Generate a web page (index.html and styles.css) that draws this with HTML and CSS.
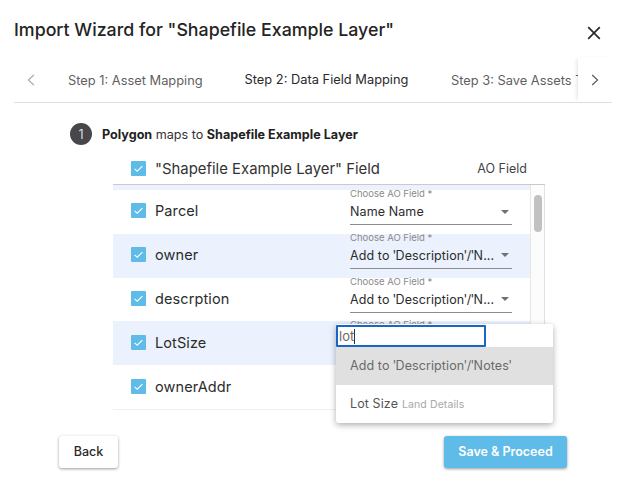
FILE: index.html
```html
<!DOCTYPE html>
<html lang="en">
<head>
<meta charset="utf-8">
<title>Import Wizard</title>
<link rel="stylesheet" href="styles.css">
</head>
<body>
<div class="dialog">
  <header class="head">
    <h1 class="title">Import Wizard for "Shapefile Example Layer"</h1>
    <svg class="close" width="14" height="14" viewBox="0 0 14 14"><path d="M1.2 1.2 12.8 12.8M12.8 1.2 1.2 12.8" stroke="#2a2a2a" stroke-width="1.7" fill="none"/></svg>
  </header>
  <nav class="tabs">
    <div class="arrow arrow-left"><svg width="8" height="12" viewBox="0 0 8 12"><path d="M6.8 1 1.4 6l5.4 5" stroke="#a8a8a8" stroke-width="1.1" fill="none"/></svg></div>
    <div class="tab-strip">
      <div class="tab tab-one">Step 1: Asset Mapping</div>
      <div class="tab tab-two active">Step 2: Data Field Mapping</div>
      <div class="tab tab-three">Step 3: Save Assets T</div>
    </div>
    <div class="arrow arrow-right"><svg width="8" height="12" viewBox="0 0 8 12"><path d="M1.2 1 6.6 6l-5.4 5" stroke="#555" stroke-width="1.1" fill="none"/></svg></div>
  </nav>
  <section class="step">
    <span class="badge">1</span>
    <p class="step-text"><b>Polygon</b> maps to <b>Shapefile Example Layer</b></p>
  </section>
  <section class="table">
    <div class="table-head">
      <span class="check"><svg width="15" height="15" viewBox="0 0 15 15"><path d="M3.6 7.8 6.2 10.2 11.4 5.2" stroke="#fff" stroke-width="1.1" fill="none"/></svg></span>
      <span class="head-name">"Shapefile Example Layer" Field</span>
      <span class="head-ao">AO Field</span>
    </div>
    <div class="list">
      <div class="rows">
        <div class="row-stub"></div>
        <div class="row">
          <span class="check"><svg width="15" height="15" viewBox="0 0 15 15"><path d="M3.6 7.8 6.2 10.2 11.4 5.2" stroke="#fff" stroke-width="1.1" fill="none"/></svg></span>
          <span class="name">Parcel</span>
          <div class="select"><span class="select-label">Choose AO Field *</span><div class="select-value"><span class="value-text">Name Name</span><i class="caret"></i></div></div>
        </div>
        <div class="row shade">
          <span class="check"><svg width="15" height="15" viewBox="0 0 15 15"><path d="M3.6 7.8 6.2 10.2 11.4 5.2" stroke="#fff" stroke-width="1.1" fill="none"/></svg></span>
          <span class="name">owner</span>
          <div class="select"><span class="select-label">Choose AO Field *</span><div class="select-value"><span class="value-text">Add to <q>'</q>Description<q>'</q>/<q>'</q>N...</span><i class="caret"></i></div></div>
        </div>
        <div class="row">
          <span class="check"><svg width="15" height="15" viewBox="0 0 15 15"><path d="M3.6 7.8 6.2 10.2 11.4 5.2" stroke="#fff" stroke-width="1.1" fill="none"/></svg></span>
          <span class="name">descrption</span>
          <div class="select"><span class="select-label">Choose AO Field *</span><div class="select-value"><span class="value-text">Add to <q>'</q>Description<q>'</q>/<q>'</q>N...</span><i class="caret"></i></div></div>
        </div>
        <div class="row shade">
          <span class="check"><svg width="15" height="15" viewBox="0 0 15 15"><path d="M3.6 7.8 6.2 10.2 11.4 5.2" stroke="#fff" stroke-width="1.1" fill="none"/></svg></span>
          <span class="name">LotSize</span>
          <div class="select"><span class="select-label">Choose AO Field *</span></div>
        </div>
        <div class="row">
          <span class="check"><svg width="15" height="15" viewBox="0 0 15 15"><path d="M3.6 7.8 6.2 10.2 11.4 5.2" stroke="#fff" stroke-width="1.1" fill="none"/></svg></span>
          <span class="name">ownerAddr</span>
        </div>
      </div>
      <div class="scroll"><div class="thumb"></div></div>
    </div>
  </section>
  <footer class="foot">
    <button class="btn btn-back" type="button">Back</button>
    <button class="btn btn-save" type="button">Save &amp; Proceed</button>
  </footer>
  <div class="menu">
    <div class="search"><div class="search-box"><span class="typed">lot</span></div></div>
    <div class="option selected"><span>Add to <q>'</q>Description<q>'</q>/<q>'</q>Notes<q>'</q></span></div>
    <div class="option"><span>Lot Size</span> <small class="option-note">Land Details</small></div>
  </div>
</div>
</body>
</html>
```
FILE: styles.css
```css
* { box-sizing: border-box; }
html, body { margin: 0; padding: 0; background: #fff; }
body { font-family: Inter, "Liberation Sans", sans-serif; color: #242424; overflow: hidden; }
.dialog { position: relative; width: 626px; height: 485px; padding: 0 14px; }

q { quotes: none; letter-spacing: -.7px; margin-left: -.7px; }

.head { display: flex; justify-content: space-between; align-items: center; height: 57px; padding-top: 3px; }
.title { margin: 0; font-size: 17.8px; font-weight: 500; line-height: 22px; color: #242424; }
.close { margin: 5px 11px 0 0; }

.tabs { display: flex; align-items: stretch; height: 46px; width: 598px; border-bottom: 1px solid #dfdfdf; }
.arrow { flex: none; display: flex; align-items: center; justify-content: center; }
.arrow-left { width: 34px; }
.arrow-right { width: 34px; position: relative; box-shadow: -3px 0 4px -2px rgba(0,0,0,.12); }
.tab-strip { flex: 1; display: flex; overflow: hidden; min-width: 0; }
.tab { flex: none; display: flex; align-items: center; height: 46px; font-size: 12.85px; font-weight: 400; color: #5f5f5f; white-space: nowrap; }
.tab-one { width: 176px; padding-left: 20px; }
.tab-two { width: 205px; justify-content: center; color: #2a2a2a; border-bottom: 1px solid #444; }
.tab-three { padding-left: 22px; }

.step { display: flex; align-items: center; gap: 10px; height: 22px; margin: 20px 0 0 56px; }
.badge { width: 22px; height: 22px; border-radius: 50%; background: #46464b; color: #fff; font-size: 13px; font-weight: 300; display: flex; align-items: center; justify-content: center; }
.step-text { margin: 0; padding-top: 1px; font-size: 12.6px; line-height: 16px; color: #333; }
.step-text b { font-weight: 700; color: #222; }

.table { width: 432px; margin: 16px 0 0 99px; }
.table-head { display: flex; align-items: center; height: 15px; padding: 0 18px; }
.head-name { margin-left: 9px; flex: 1; font-size: 14.9px; color: #333; }
.head-ao { font-size: 12.5px; color: #444; }
.check { flex: none; display: block; width: 15px; height: 15px; background: #5fbbe8; border-radius: 1px; }
.check svg { display: block; }

.list { display: flex; height: 226px; border-top: 1px solid #c9c9cf; margin-top: 8px; border-bottom: 1px solid #eef1f7; }
.rows { flex: none; width: 417px; }
.row-stub { height: 5px; background: #ebf2fd; }
.row { display: flex; align-items: center; height: 43.8px; padding: 0 0 2px 18px; }
.row.shade { background: #ebf2fd; }
.name { margin-left: 9px; width: 195px; flex: none; font-size: 14.5px; letter-spacing: .1px; color: #2c2c2c; }
.select { width: 162px; flex: none; align-self: flex-start; display: flex; flex-direction: column; margin-top: -2px; }
.select-label { font-size: 9.5px; line-height: 11px; color: #8a8a8a; }
.select-value { display: flex; align-items: center; justify-content: space-between; height: 26px; border-bottom: 1px solid #8c8c8c; padding-right: 3.5px; }
.value-text { white-space: nowrap; font-size: 12.5px; letter-spacing: .1px; color: #2c2c2c; }
.caret { flex: none; width: 0; height: 0; border-left: 4.5px solid transparent; border-right: 4.5px solid transparent; border-top: 4.5px solid #707070; }

.scroll { flex: 1; border-left: 1px solid #e6e6e6; border-right: 1px solid #e2e2e2; padding: 10px 2px 0 3px; background: #fcfcfc; height: 100%; }
.thumb { width: 8px; height: 37px; border-radius: 4px; background: #c1c1c1; }

.foot { display: flex; justify-content: space-between; width: 508px; margin: 26px 0 0 45px; }
.btn { height: 32px; border: 0; border-radius: 3px; font-family: inherit; font-size: 12.5px; font-weight: 500; box-shadow: 0 1px 3px rgba(0,0,0,.4); padding: 0 0 1px; }
.btn-back { width: 59px; background: #fff; color: #2a2a2a; }
.btn-save { width: 123px; background: #5fbbe8; color: #fff; font-weight: 600; }

.menu { position: absolute; left: 336px; top: 324px; width: 217px; height: 99px; background: #fff; border-radius: 3px; box-shadow: 0 2px 6px rgba(0,0,0,.32); }
.search { height: 23px; padding-top: 1px; }
.search-box { display: flex; align-items: center; width: 150px; height: 22px; border: 2px solid #1a66c4; border-radius: 1px; padding-left: 1px; font-size: 13px; color: #6a6a6a; }
.typed { display: block; line-height: 15px; border-right: 1px solid #333; }
.option { display: flex; align-items: baseline; gap: 4px; height: 38px; padding: 11px 14px 0; font-size: 12.5px; letter-spacing: .1px; color: #555; }
.option.selected { background: #e0e0e0; color: #6a6a6a; }
.option-note { font-size: 10.5px; color: #a8a8a8; }
```
